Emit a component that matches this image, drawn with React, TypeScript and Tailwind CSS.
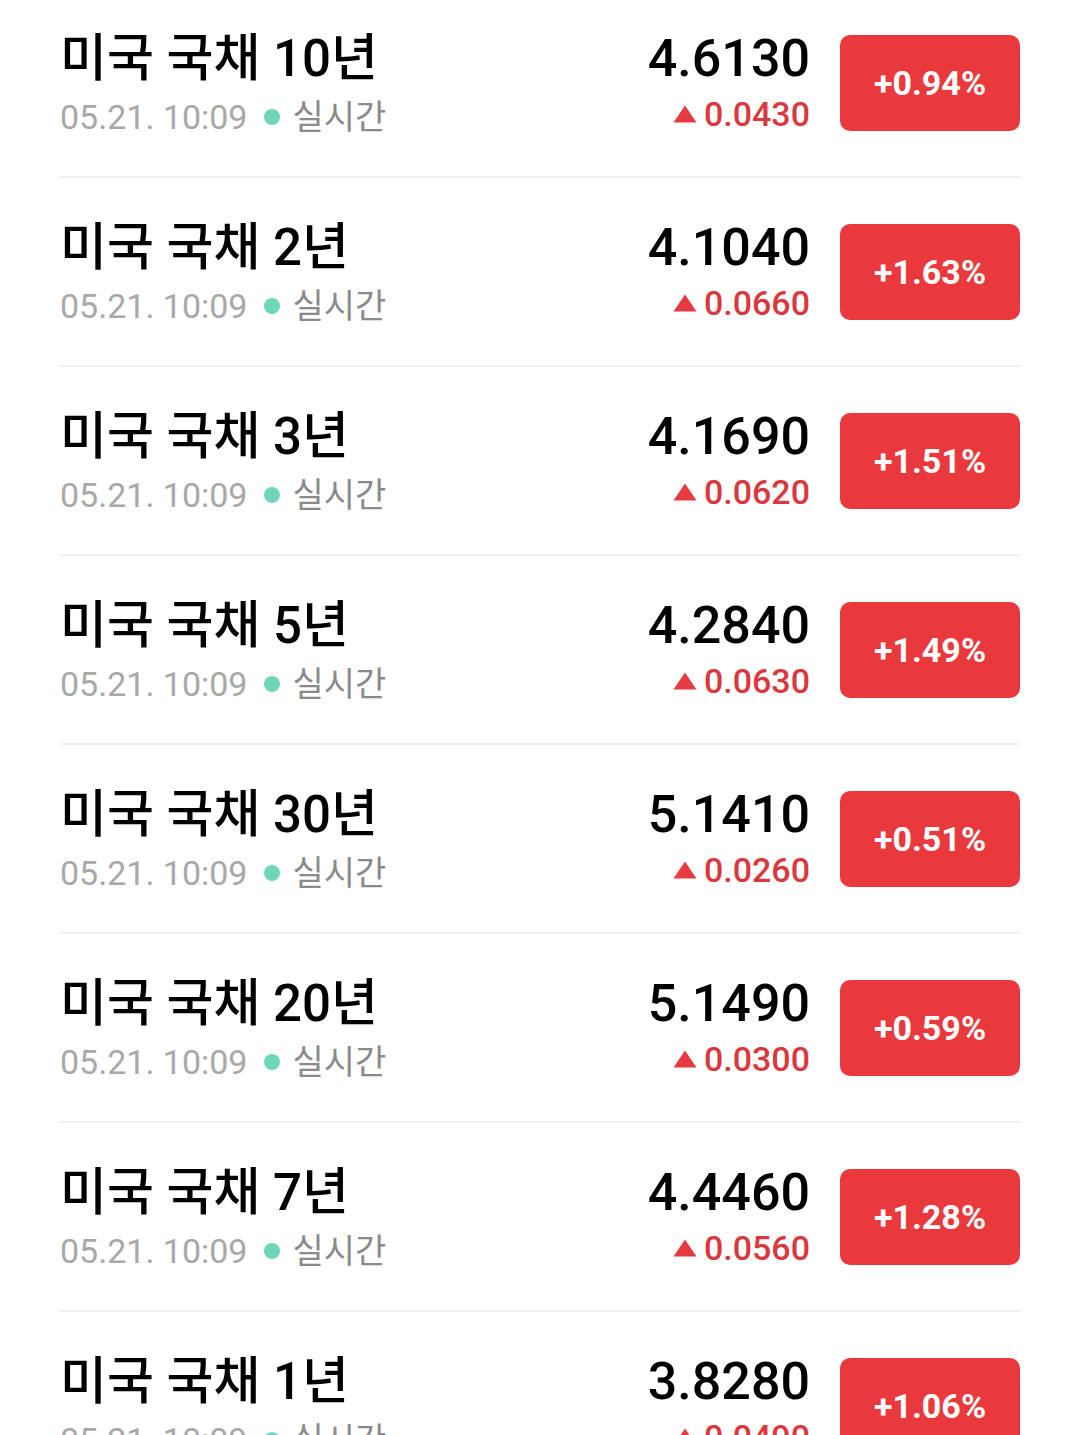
const rows = [
  { term: "10년", price: "4.6130", change: "0.0430", pct: "+0.94%" },
  { term: "2년", price: "4.1040", change: "0.0660", pct: "+1.63%" },
  { term: "3년", price: "4.1690", change: "0.0620", pct: "+1.51%" },
  { term: "5년", price: "4.2840", change: "0.0630", pct: "+1.49%" },
  { term: "30년", price: "5.1410", change: "0.0260", pct: "+0.51%" },
  { term: "20년", price: "5.1490", change: "0.0300", pct: "+0.59%" },
  { term: "7년", price: "4.4460", change: "0.0560", pct: "+1.28%" },
  { term: "1년", price: "3.8280", change: "0.0490", pct: "+1.06%" },
];

function BondRow({ term, price, change, pct }: (typeof rows)[number]) {
  return (
    <div className="border-b-2 border-[#f0f0f0] pt-[46px] pb-[45px]">
      <div className="flex h-[96px] items-start">
        {/* Name + timestamp */}
        <div className="flex-1">
          <p className="text-[51px] leading-[48px] font-medium text-black">미국 국채 {term}</p>
          <div className="mt-[14px] flex items-center text-[34px] leading-[40px]">
            <span className="text-[#a8a8a8]">05.21. 10:09</span>
            <span className="mr-[12px] ml-[17px] h-[16px] w-[16px] rounded-full bg-[#6fd6b9]" />
            <span className="text-[#8a8a8a]">실시간</span>
          </div>
        </div>

        {/* Yield + change */}
        <div className="flex flex-col items-end">
          <p className="text-[52px] leading-[48px] font-medium text-black">{price}</p>
          <p className="mt-[11px] flex items-center text-[34px] leading-[40px] font-medium text-[#d9383e]">
            <svg width="24" height="18" viewBox="0 0 24 18" className="mr-[7px]">
              <path d="M12 0.5 L23.5 17.5 L0.5 17.5 Z" fill="#e63a40" />
            </svg>
            {change}
          </p>
        </div>

        <div className="ml-[30px] flex h-[96px] w-[180px] items-center justify-center rounded-[10px] bg-[#e9393d] text-[34px] font-bold text-white">
          {pct}
        </div>
      </div>
    </div>
  );
}

export default function App() {
  return (
    <div
      className="h-[1435px] overflow-hidden bg-white px-[60px]"
      style={{ fontFamily: "Roboto, 'Noto Sans CJK KR', sans-serif" }}
    >
      <div className="-mt-[11px]">
        {rows.map((r) => (
          <BondRow key={r.term} {...r} />
        ))}
      </div>
    </div>
  );
}
